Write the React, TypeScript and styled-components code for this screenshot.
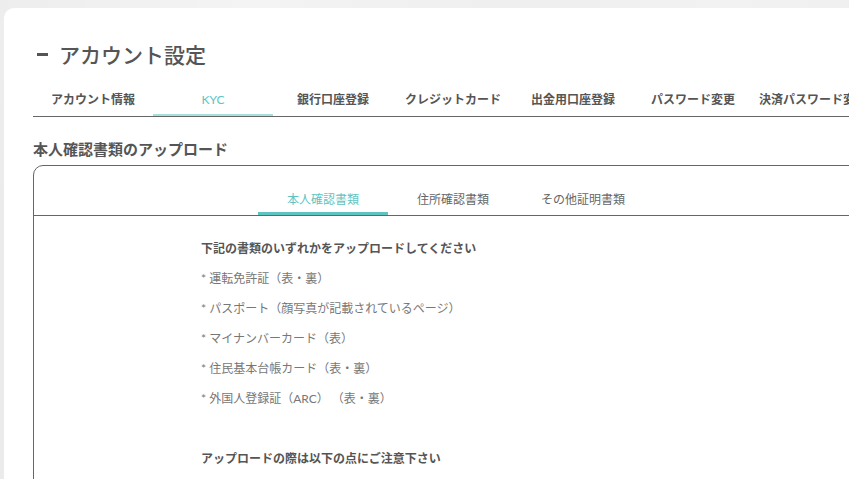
import React from "react";
import styled, { createGlobalStyle } from "styled-components";

const GlobalStyle = createGlobalStyle`
  body {
    margin: 0;
    overflow: hidden;
    background: #ebebeb;
    background-image:
      radial-gradient(ellipse at 30% 0%, #f4f4f4 0%, transparent 40%),
      radial-gradient(ellipse at 85% 0%, #f2f2f2 0%, transparent 35%);
    font-family: "Lato", "Noto Sans CJK JP", sans-serif;
    color: #555;
  }
`;

const Page = styled.div`
  padding: 8px 0 0 4px;
`;

const Card = styled.div`
  width: 898px;
  min-height: 480px;
  box-sizing: border-box;
  padding: 31px 29px 0 29px;
  background: #fff;
  border-radius: 10px 0 0 0;
`;

const TitleRow = styled.h1`
  display: flex;
  align-items: center;
  margin: 0;
  height: 30px;
  font-size: 21px;
  font-weight: 500;
  color: #555;
`;

const Dash = styled.span`
  display: inline-block;
  width: 11px;
  height: 3px;
  margin: 0 11px 0 4px;
  background: #555;
`;

const TabBar = styled.nav`
  display: flex;
  width: 840px;
  margin-top: 14px;
  border-bottom: 1px solid #666;
`;

const Tab = styled.div<{ $active?: boolean }>`
  width: 120px;
  flex: none;
  height: 33px;
  line-height: 33px;
  text-align: center;
  white-space: nowrap;
  font-size: 12px;
  font-weight: ${(p) => (p.$active ? 400 : 700)};
  color: ${(p) => (p.$active ? "#5fc3c1" : "#555")};
  box-shadow: ${(p) => (p.$active ? "inset 0 -2px 0 #a6e0dd" : "none")};
`;

const SectionTitle = styled.h2`
  margin: 21px 0 0;
  line-height: 22px;
  font-size: 15px;
  font-weight: 700;
  color: #555;
`;

const Box = styled.section`
  width: 840px;
  margin-top: 5px;
  min-height: 400px;
  box-sizing: border-box;
  border: 1px solid #666;
  border-radius: 10px 0 0 0;
`;

const InnerTabs = styled.div`
  display: flex;
  justify-content: center;
  border-bottom: 1px solid #666;
`;

const InnerTab = styled.div<{ $active?: boolean }>`
  width: 130px;
  padding: 24px 0 5px;
  line-height: 20px;
  text-align: center;
  font-size: 12px;
  color: ${(p) => (p.$active ? "#5fc3c1" : "#666")};
  box-shadow: ${(p) => (p.$active ? "inset 0 -3px 0 #5fc3c1" : "none")};
`;

const Content = styled.div`
  padding: 18px 0 0 167px;
`;

const Heading = styled.p<{ $gap?: boolean }>`
  margin: ${(p) => (p.$gap ? "30px" : "0")} 0 0;
  line-height: 30px;
  font-size: 12px;
  font-weight: 700;
  color: #555;
`;

const Item = styled.p`
  margin: 0;
  line-height: 30px;
  font-size: 12px;
  color: #777;
`;

const tabs = [
  "アカウント情報",
  "KYC",
  "銀行口座登録",
  "クレジットカード",
  "出金用口座登録",
  "パスワード変更",
  "決済パスワード変更",
];

const docs = ["本人確認書類", "住所確認書類", "その他証明書類"];

const items = [
  "* 運転免許証（表・裏）",
  "* パスポート（顔写真が記載されているページ）",
  "* マイナンバーカード（表）",
  "* 住民基本台帳カード（表・裏）",
  "* 外国人登録証（ARC） （表・裏）",
];

export default function App() {
  return (
    <Page>
      <GlobalStyle />
      <Card>
        <TitleRow>
          <Dash />
          アカウント設定
        </TitleRow>
        <TabBar>
          {tabs.map((t) => (
            <Tab key={t} $active={t === "KYC"}>
              {t}
            </Tab>
          ))}
        </TabBar>
        <SectionTitle>本人確認書類のアップロード</SectionTitle>
        <Box>
          <InnerTabs>
            {docs.map((d, i) => (
              <InnerTab key={d} $active={i === 0}>
                {d}
              </InnerTab>
            ))}
          </InnerTabs>
          <Content>
            <Heading>下記の書類のいずれかをアップロードしてください</Heading>
            {items.map((it) => (
              <Item key={it}>{it}</Item>
            ))}
            <Heading $gap>アップロードの際は以下の点にご注意下さい</Heading>
          </Content>
        </Box>
      </Card>
    </Page>
  );
}
